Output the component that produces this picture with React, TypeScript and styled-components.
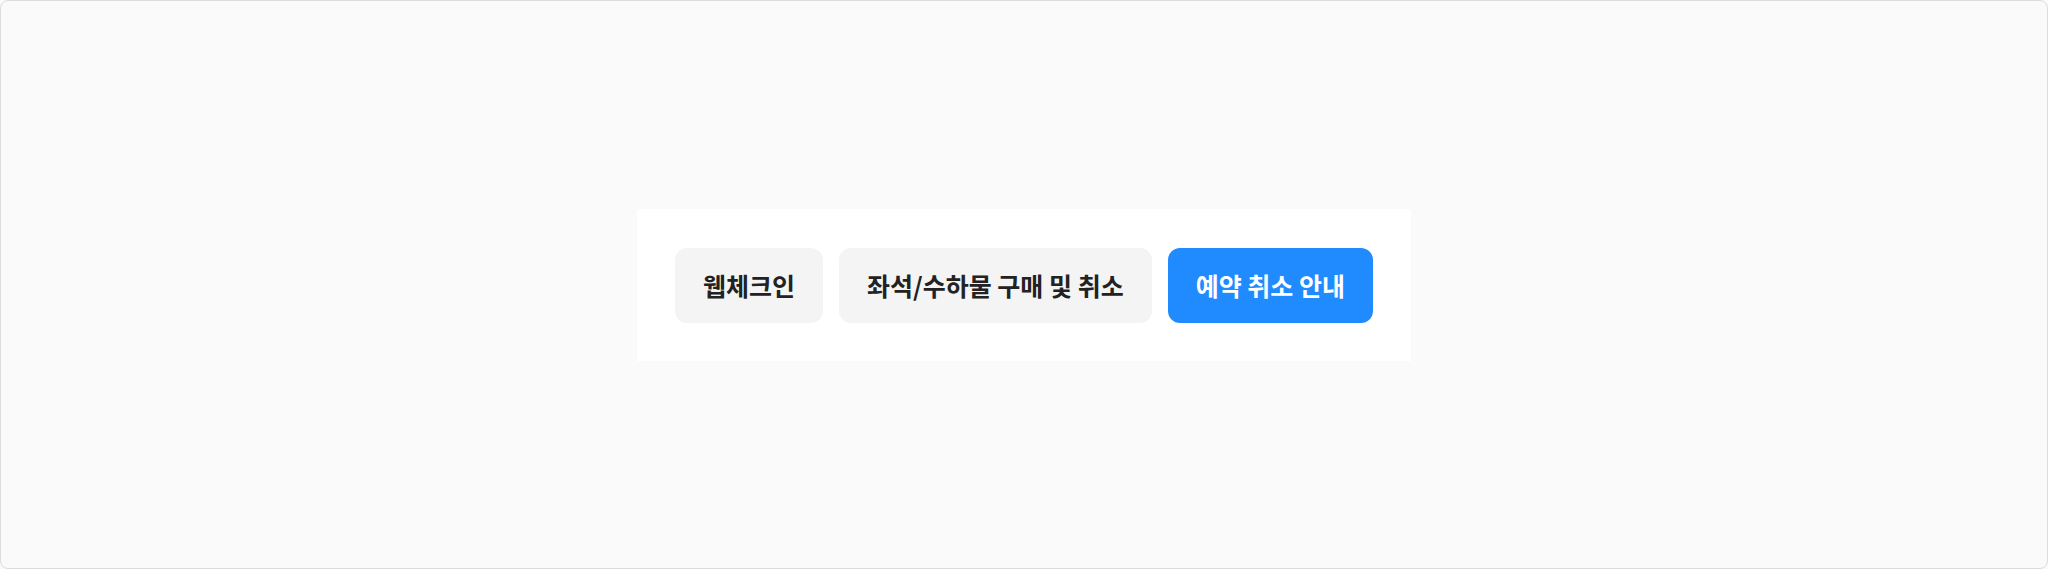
import React from "react";
import styled, { createGlobalStyle } from "styled-components";

const Global = createGlobalStyle`
  html, body { margin: 0; padding: 0; background: #fafafa; }
  * { box-sizing: border-box; }
`;

const Frame = styled.div`
  width: 2048px;
  height: 569px;
  border: 1px solid #dcdcdc;
  border-radius: 8px;
  background: #fafafa;
  display: flex;
  align-items: center;
  justify-content: center;
`;

const Panel = styled.div`
  background: #ffffff;
  display: flex;
  gap: 16px;
  padding: 39px 38px 38px;
`;

const Tab = styled.button<{ $active?: boolean }>`
  height: 75px;
  padding: 0 28px;
  border: none;
  border-radius: 12px;
  background: ${(p) => (p.$active ? "#1f8bff" : "#f4f4f4")};
  color: ${(p) => (p.$active ? "#ffffff" : "#222222")};
  font-family: "Noto Sans CJK KR", "Noto Sans", sans-serif;
  font-size: 25px;
  font-weight: 700;
  white-space: nowrap;
  cursor: pointer;
`;

export default function App() {
  return (
    <>
      <Global />
      <Frame>
        <Panel>
          <Tab>웹체크인</Tab>
          <Tab>좌석/수하물 구매 및 취소</Tab>
          <Tab $active>예약 취소 안내</Tab>
        </Panel>
      </Frame>
    </>
  );
}
